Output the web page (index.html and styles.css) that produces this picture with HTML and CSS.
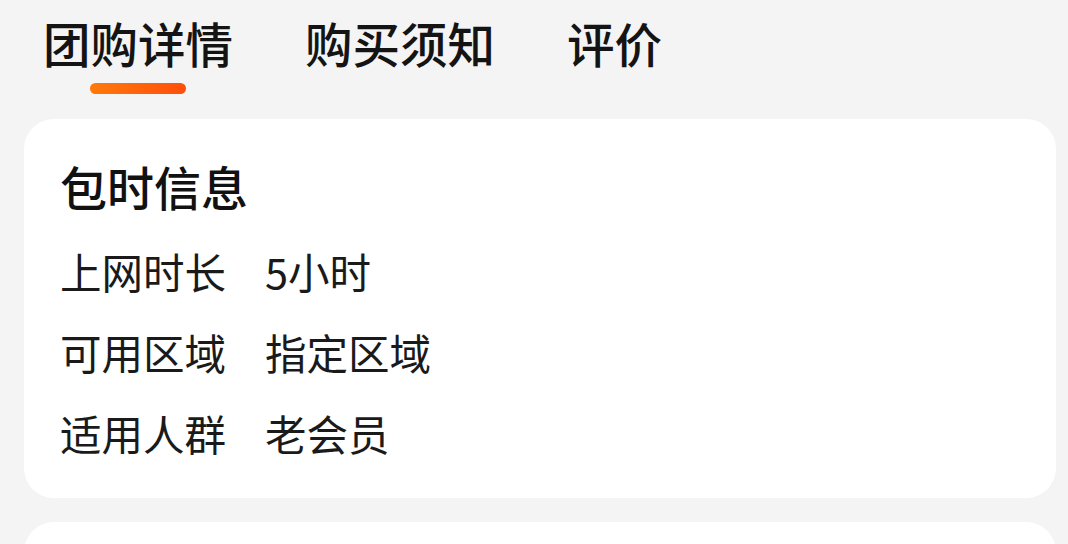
FILE: index.html
```html
<!DOCTYPE html>
<html lang="zh-CN">
<head>
<meta charset="utf-8">
<link rel="stylesheet" href="styles.css">
</head>
<body>
<div class="page">
  <nav class="tabs">
    <div class="tab active"><span class="tab-label">团购详情</span><span class="tab-bar"></span></div>
    <div class="tab"><span class="tab-label">购买须知</span></div>
    <div class="tab"><span class="tab-label">评价</span></div>
  </nav>
  <section class="card">
    <h2 class="card-title">包时信息</h2>
    <div class="row"><span class="label">上网时长</span><span class="value">5小时</span></div>
    <div class="row"><span class="label">可用区域</span><span class="value">指定区域</span></div>
    <div class="row"><span class="label">适用人群</span><span class="value">老会员</span></div>
  </section>
  <section class="card card-next"></section>
</div>
</body>
</html>
```
FILE: styles.css
```css
* { box-sizing: border-box; }
html, body { margin: 0; padding: 0; }
body {
  background: #f4f4f4;
  font-family: "Noto Sans CJK SC", "Noto Sans", sans-serif;
  color: #161616;
  overflow: hidden;
  height: 544px;
}
.page {
  display: flex;
  flex-direction: column;
  padding: 0 12px 0 24px;
}
.tabs {
  display: flex;
  gap: 72px;
  padding: 12px 0 0 19px;
  height: 119px;
}
.tab {
  display: flex;
  flex-direction: column;
  align-items: center;
}
.tab-label {
  font-size: 47.5px;
  line-height: 62px;
  font-weight: 500;
  color: #141414;
}
.tab-bar {
  margin-top: 9px;
  width: 96px;
  height: 11px;
  border-radius: 6px;
  background: linear-gradient(90deg, #ff7a0a, #ff4e0c);
}
.card {
  background: #fff;
  border-radius: 30px;
  padding: 37px 36px 24px;
  width: 1032px;
}
.card-title {
  margin: 0 0 15px;
  font-size: 47px;
  line-height: 60px;
  font-weight: 500;
  color: #111;
}
.row {
  display: flex;
  font-size: 41.5px;
  line-height: 81px;
  color: #1a1a1a;
}
.label { width: 205px; }
.card-next {
  margin-top: 24px;
  height: 20px;
}
```
